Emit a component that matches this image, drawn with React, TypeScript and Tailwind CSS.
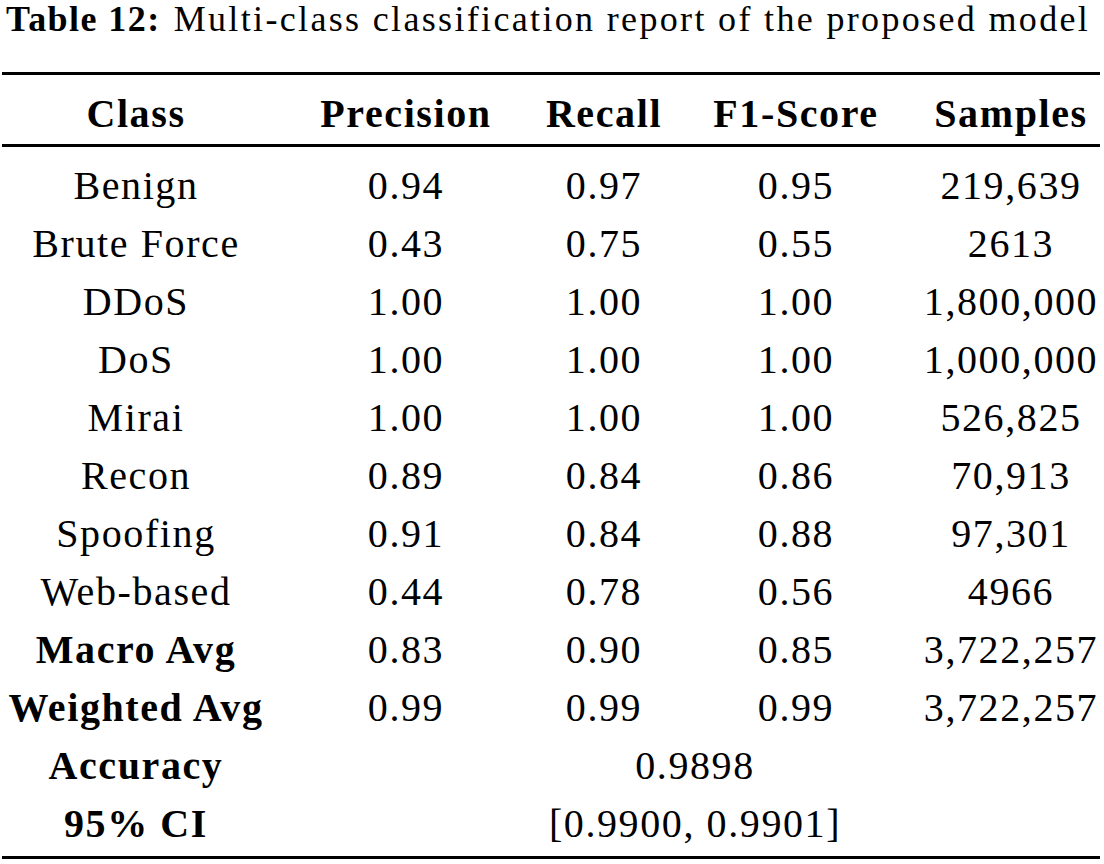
import * as React from "react";

type Row = {
  label: string;
  bold?: boolean;
  values?: [string, string, string, string];
  span?: string;
};

const rows: Row[] = [
  { label: "Benign", values: ["0.94", "0.97", "0.95", "219,639"] },
  { label: "Brute Force", values: ["0.43", "0.75", "0.55", "2613"] },
  { label: "DDoS", values: ["1.00", "1.00", "1.00", "1,800,000"] },
  { label: "DoS", values: ["1.00", "1.00", "1.00", "1,000,000"] },
  { label: "Mirai", values: ["1.00", "1.00", "1.00", "526,825"] },
  { label: "Recon", values: ["0.89", "0.84", "0.86", "70,913"] },
  { label: "Spoofing", values: ["0.91", "0.84", "0.88", "97,301"] },
  { label: "Web-based", values: ["0.44", "0.78", "0.56", "4966"] },
  { label: "Macro Avg", bold: true, values: ["0.83", "0.90", "0.85", "3,722,257"] },
  { label: "Weighted Avg", bold: true, values: ["0.99", "0.99", "0.99", "3,722,257"] },
  { label: "Accuracy", bold: true, span: "0.9898" },
  { label: "95% CI", bold: true, span: "[0.9900, 0.9901]" },
];

const headers = ["Class", "Precision", "Recall", "F1-Score", "Samples"];

const gridCols = "grid grid-cols-[268px_272px_124px_260px_170px]";

function Cell({ children, className = "" }: { children: React.ReactNode; className?: string }) {
  return <div className={"flex justify-center whitespace-nowrap " + className}>{children}</div>;
}

export default function App() {
  return (
    <div className="h-[864px] w-[1104px] overflow-hidden bg-white font-['Liberation_Serif',serif] text-black">
      {/* caption */}
      <div className="h-[72px] whitespace-nowrap pl-[6px] text-[36px] leading-[38px]">
        <span className="font-bold tracking-[0.04em]">Table 12:</span>
        <span className="ml-[13px] tracking-[0.065em]">
          Multi-class classification report of the proposed model
        </span>
      </div>

      <div className="ml-[2px] w-[1098px] border-t-[3px] border-b-[3px] border-black text-[40px] tracking-[0.04em]">
        <div className={gridCols + " h-[72px] border-b-[3px] border-black pt-[6px] font-bold leading-[66px]"}>
          {headers.map((h) => (
            <Cell key={h}>{h}</Cell>
          ))}
        </div>

        <div className="pt-[10px] pb-[3px]">
          {rows.map((r) => (
            <div key={r.label} className={gridCols + " h-[58px] leading-[58px]"}>
              <Cell className={r.bold ? "font-bold" : ""}>{r.label}</Cell>
              {r.values ? (
                r.values.map((v, i) => <Cell key={i}>{v}</Cell>)
              ) : (
                <Cell className="col-span-4 pl-[24px]">{r.span}</Cell>
              )}
            </div>
          ))}
        </div>
      </div>
    </div>
  );
}
